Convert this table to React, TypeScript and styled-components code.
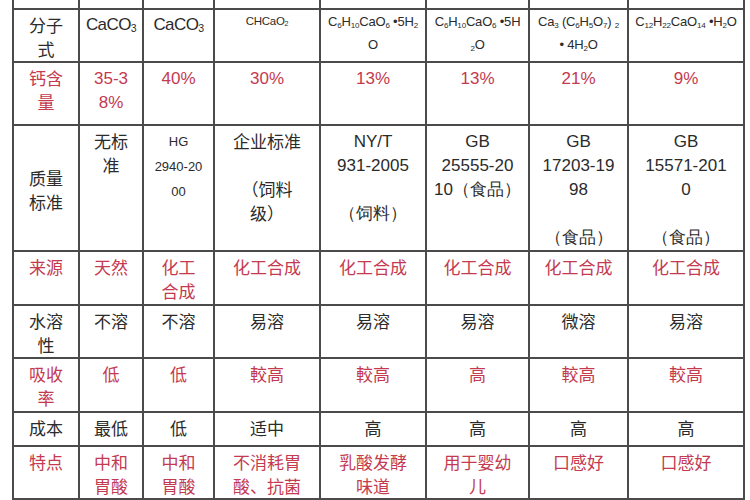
import React from 'react'
import styled, { createGlobalStyle } from 'styled-components'

const GlobalStyle = createGlobalStyle`
	html, body {
		margin: 0;
		padding: 0;
		background: #fff;
	}
	body {
		font-family: 'Noto Sans CJK SC', 'Liberation Sans', sans-serif;
	}
`

type Tone = 'black' | 'red'
type Face = 'cjk' | 'latin' | 'code' | 'formula' | 'small' | 'tiny'

type CellData = {
	content: React.ReactNode
	face?: Face
	middle?: boolean
}

type RowData = {
	tone: Tone
	height: number
	cells: CellData[]
}

const Page = styled.div`
	height: 500px;
	overflow: hidden;
	background: #fff;
`

const Sheet = styled.table`
	margin: 0 0 0 12px;
	width: 731px;
	border-collapse: collapse;
	table-layout: fixed;

	tr:first-child td {
		border-top: 0;
		padding: 0;
	}
`

const Row = styled.tr<{ $tone: Tone; $h: number }>`
	height: ${(p) => p.$h}px;
	color: ${(p) => (p.$tone === 'red' ? '#c43a4f' : '#2b2b2b')};
`

const faces: Record<Face, string> = {
	cjk: `font-family: 'Noto Sans CJK SC', serif; font-size: 17px; line-height: 24px; padding-top: 3px;`,
	latin: `font-family: 'Liberation Sans', sans-serif; font-size: 17px; line-height: 24px; padding-top: 4px;`,
	code: `font-family: 'Liberation Sans', sans-serif; font-size: 13px; line-height: 25px; padding-top: 3px;`,
	formula: `font-family: 'Liberation Sans', sans-serif; font-size: 17px; letter-spacing: -0.6px; line-height: 24px; padding-top: 3px;`,
	small: `font-family: 'Liberation Sans', sans-serif; font-size: 13px; letter-spacing: -0.2px; line-height: 23px; padding-top: 0;`,
	tiny: `font-family: 'Liberation Sans', sans-serif; font-size: 11.5px; letter-spacing: -0.3px; line-height: 23px; padding-top: 0;`,
}

const Cell = styled.td<{ $face: Face; $middle?: boolean }>`
	border: 2px solid #4b4b4b;
	padding: 0 2px;
	text-align: center;
	vertical-align: ${(p) => (p.$middle ? 'middle' : 'top')};
	white-space: pre-line;
	overflow: hidden;
	${(p) => faces[p.$face]}
`

const Sub = styled.sub`
	font-size: 0.62em;
	vertical-align: -0.2em;
	line-height: 0;
`

const widths = [66, 64, 71, 106, 106, 103, 99, 116]

const c = (content: React.ReactNode, face: Face = 'cjk', middle = false): CellData => ({
	content,
	face,
	middle,
})

const blank = Array.from({ length: 8 }, () => c(null))

const rows: RowData[] = [
	{ tone: 'black', height: 9, cells: blank },
	{
		tone: 'black',
		height: 53,
		cells: [
			c('分子\n式'),
			c(<>CaCO<Sub>3</Sub></>, 'formula'),
			c(<>CaCO<Sub>3</Sub></>, 'formula'),
			c(<>CHCaO<Sub>2</Sub></>, 'tiny'),
			c(
				<>
					C<Sub>6</Sub>H<Sub>10</Sub>CaO<Sub>6</Sub> •5H<Sub>2</Sub>
					{'\n'}O
				</>,
				'small'
			),
			c(
				<>
					C<Sub>6</Sub>H<Sub>10</Sub>CaO<Sub>6</Sub> •5H{'\n'}
					<Sub>2</Sub>O
				</>,
				'small'
			),
			c(
				<>
					Ca<Sub>3</Sub> (C<Sub>6</Sub>H<Sub>5</Sub>O<Sub>7</Sub>) <Sub>2</Sub>
					{'\n'}• 4H<Sub>2</Sub>O
				</>,
				'small'
			),
			c(
				<>
					C<Sub>12</Sub>H<Sub>22</Sub>CaO<Sub>14</Sub> •H<Sub>2</Sub>O
				</>,
				'small'
			),
		],
	},
	{
		tone: 'red',
		height: 63,
		cells: [
			c('钙含\n量'),
			c('35-3\n8%', 'latin'),
			c('40%', 'latin'),
			c('30%', 'latin'),
			c('13%', 'latin'),
			c('13%', 'latin'),
			c('21%', 'latin'),
			c('9%', 'latin'),
		],
	},
	{
		tone: 'black',
		height: 126,
		cells: [
			c('质量\n标准', 'cjk', true),
			c('无标\n准'),
			c('HG\n2940-20\n00', 'code'),
			c('企业标准\n\n（饲料\n级）'),
			c('NY/T\n931-2005\n\n（饲料）', 'latin'),
			c('GB\n25555-20\n10（食品）', 'latin'),
			c('GB\n17203-19\n98\n\n（食品）', 'latin'),
			c('GB\n15571-201\n0\n\n（食品）', 'latin'),
		],
	},
	{
		tone: 'red',
		height: 54,
		cells: [
			c('来源'),
			c('天然'),
			c('化工\n合成'),
			c('化工合成'),
			c('化工合成'),
			c('化工合成'),
			c('化工合成'),
			c('化工合成'),
		],
	},
	{
		tone: 'black',
		height: 51,
		cells: [
			c('水溶\n性'),
			c('不溶'),
			c('不溶'),
			c('易溶'),
			c('易溶'),
			c('易溶'),
			c('微溶'),
			c('易溶'),
		],
	},
	{
		tone: 'red',
		height: 54,
		cells: [
			c('吸收\n率'),
			c('低'),
			c('低'),
			c('較高'),
			c('較高'),
			c('高'),
			c('較高'),
			c('較高'),
		],
	},
	{
		tone: 'black',
		height: 34,
		cells: [
			c('成本'),
			c('最低'),
			c('低'),
			c('适中'),
			c('高'),
			c('高'),
			c('高'),
			c('高'),
		],
	},
	{
		tone: 'red',
		height: 51,
		cells: [
			c('特点'),
			c('中和\n胃酸'),
			c('中和\n胃酸'),
			c('不消耗胃\n酸、抗菌'),
			c('乳酸发酵\n味道'),
			c('用于婴幼\n儿'),
			c('口感好'),
			c('口感好'),
		],
	},
	{ tone: 'red', height: 30, cells: blank },
]

export default function App() {
	return (
		<Page>
			<GlobalStyle />
			<Sheet>
				<colgroup>
					{widths.map((w, i) => (
						<col key={i} style={{ width: w }} />
					))}
				</colgroup>
				<tbody>
					{rows.map((row, r) => (
						<Row key={r} $tone={row.tone} $h={row.height}>
							{row.cells.map((cell, i) => (
								<Cell key={i} $face={cell.face ?? 'cjk'} $middle={cell.middle}>
									{cell.content}
								</Cell>
							))}
						</Row>
					))}
				</tbody>
			</Sheet>
		</Page>
	)
}
